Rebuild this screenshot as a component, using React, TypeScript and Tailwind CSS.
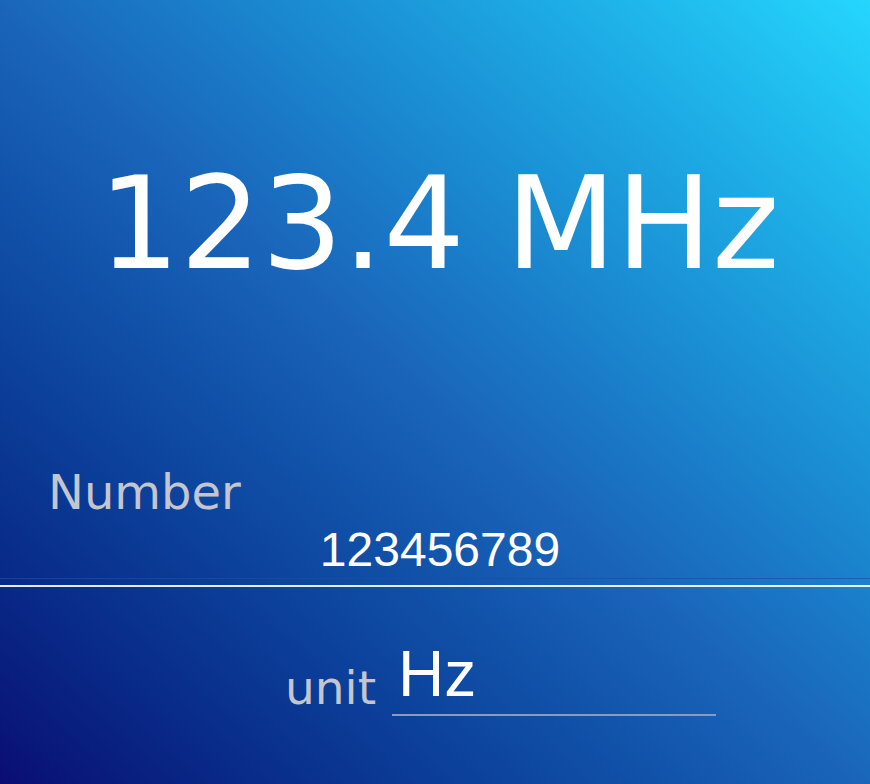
const App = () => {
  return (
    <div className="w-[870px] h-[784px] overflow-hidden bg-gradient-to-tr from-[#0a0c74] via-[#1a66bb] to-[#25d6fd] text-white">
      {/* big readout */}
      <div className="pt-[160px] text-center font-['DejaVu_Sans',sans-serif] text-[128px] leading-[128px] pl-[8px]">
        123.4 MHz
      </div>

      <div className="mt-[180px] pl-[48px] font-['DejaVu_Sans',sans-serif] text-[48px] leading-[48px] text-[#c3c6cf]">
        Number
      </div>

      <div className="mt-[10px] border-b border-[#1b4fa8]/70 pb-[4px] text-center font-['Liberation_Sans',Arial,sans-serif] text-[48px] leading-[48px] pl-[10px]">
        123456789
      </div>

      <div className="mt-[6px] h-[2px] bg-white/90" />

      <div className="mt-[55px] flex items-start pl-[285px]">
        <span className="mt-[22px] font-['DejaVu_Sans',sans-serif] text-[47px] leading-[47px] text-[#c3c6cf]">
          unit
        </span>
        <div className="ml-[16px] w-[324px] border-b-2 border-[#8a9bbd] pb-[8px] pl-[6px] font-['Liberation_Sans',Arial,sans-serif] text-[64px] leading-[64px]">
          Hz
        </div>
      </div>
    </div>
  );
};

export default App;
